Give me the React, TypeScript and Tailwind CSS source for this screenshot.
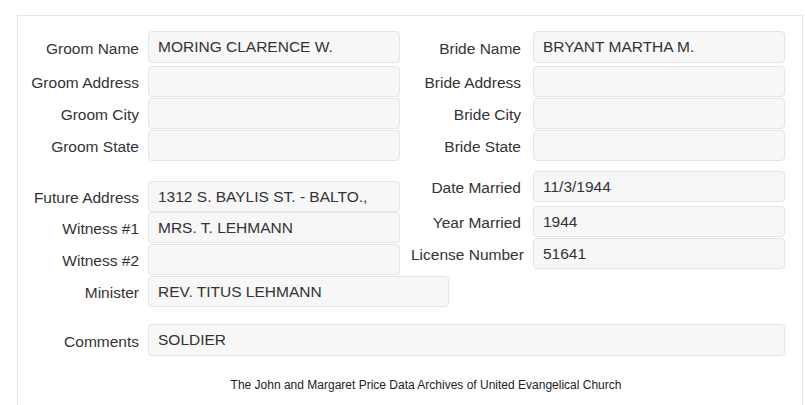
import React from 'react';

interface Field {
  label: string;
  value: string;
  gap?: string;
  height?: string;
  width?: string;
}

const groomFields: Field[] = [
  { label: 'Groom Name', value: 'MORING CLARENCE W.', height: 'h-[32px]' },
  { label: 'Groom Address', value: '', gap: 'mt-[3px]' },
  { label: 'Groom City', value: '', gap: 'mt-[1px]' },
  { label: 'Groom State', value: '', gap: 'mt-[1px]' },
];

const brideFields: Field[] = [
  { label: 'Bride Name', value: 'BRYANT MARTHA M.', height: 'h-[32px]' },
  { label: 'Bride Address', value: '', gap: 'mt-[3px]' },
  { label: 'Bride City', value: '', gap: 'mt-[1px]' },
  { label: 'Bride State', value: '', gap: 'mt-[1px]' },
];

const otherLeft: Field[] = [
  { label: 'Future Address', value: '1312 S. BAYLIS ST. - BALTO.,' },
  { label: 'Witness #1', value: 'MRS. T. LEHMANN' },
  { label: 'Witness #2', value: '', gap: 'mt-[1px]' },
  { label: 'Minister', value: 'REV. TITUS LEHMANN', gap: 'mt-[1px]', width: 'w-[301px]' },
];

const otherRight: Field[] = [
  { label: 'Date Married', value: '11/3/1944' },
  { label: 'Year Married', value: '1944', gap: 'mt-[4px]' },
  { label: 'License Number', value: '51641', gap: 'mt-[1px]' },
];

// left column labels span the full cell; right column labels start a bit in,
// so a long label spills to the right like the original
function Row({ field, side }: { field: Field; side: 'left' | 'right' }) {
  const labelBox = side === 'left' ? 'w-[121px]' : 'ml-[11px] w-[110px]';
  const inputGap = side === 'left' ? 'ml-[9px]' : 'ml-[12px]';
  return (
    <div className={`flex items-center ${field.gap || ''}`}>
      <label className={`${labelBox} shrink-0 pt-[3px] text-right whitespace-nowrap`}>{field.label}</label>
      <div
        className={`${inputGap} ${field.width || 'w-[252px]'} ${field.height || 'h-[31px]'} shrink-0 flex items-center pl-[9px] rounded-[4px] border border-[#e4e4e4] bg-[#f7f7f7]`}
      >
        {field.value}
      </div>
    </div>
  );
}

export default function App() {
  return (
    <div className="min-h-screen bg-white text-[15.5px] text-[#333] font-['Liberation_Sans',Arial,sans-serif]">
      <div className="ml-[17px] mt-[15px] w-[786px] pb-[20px] pt-[15px] border-l border-t border-r border-[#e6e6e6]">
        {/* Groom / Bride */}
        <div className="flex">
          <div className="w-[382px] shrink-0">
            {groomFields.map((f) => (
              <Row key={f.label} field={f} side="left" />
            ))}
          </div>
          <div>
            {brideFields.map((f) => (
              <Row key={f.label} field={f} side="right" />
            ))}
          </div>
        </div>

        {/* Other details */}
        <div className="flex items-start">
          <div className="w-[382px] shrink-0 mt-[20px]">
            {otherLeft.map((f) => (
              <Row key={f.label} field={f} side="left" />
            ))}
          </div>
          <div className="mt-[10px]">
            {otherRight.map((f) => (
              <Row key={f.label} field={f} side="right" />
            ))}
          </div>
        </div>

        {/* Comments */}
        <div className="mt-[17px]">
          <Row field={{ label: 'Comments', value: 'SOLDIER', height: 'h-[32px]', width: 'w-[637px]' }} side="left" />
        </div>

        <p className="mt-[21px] pl-[39px] pr-[7px] text-center text-[12px] leading-[16px] text-[#222]">
          The John and Margaret Price Data Archives of United Evangelical Church
        </p>
      </div>
    </div>
  );
}
